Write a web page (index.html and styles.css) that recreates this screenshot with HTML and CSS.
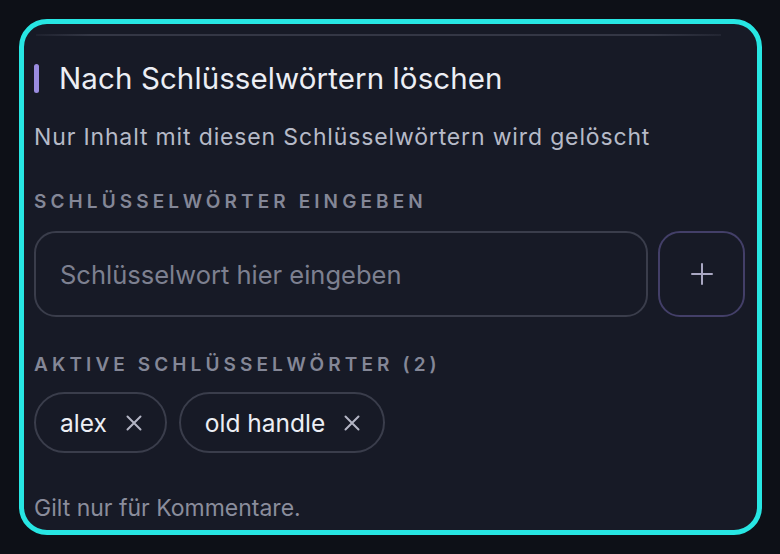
FILE: index.html
```html
<!DOCTYPE html>
<html lang="de">
<head>
<meta charset="utf-8">
<link rel="stylesheet" href="styles.css">
</head>
<body>
<div class="card">
  <div class="divider"></div>
  <h2 class="title"><span class="bar"></span>Nach Schlüsselwörtern löschen</h2>
  <p class="subtitle">Nur Inhalt mit diesen Schlüsselwörtern wird gelöscht</p>
  <div class="label label-input">Schlüsselwörter eingeben</div>
  <div class="input-row">
    <div class="input">Schlüsselwort hier eingeben</div>
    <button class="add" type="button">
      <svg width="22" height="22" viewBox="0 0 22 22"><path d="M11 1v20M1 11h20" stroke="#a9a7c2" stroke-width="2" stroke-linecap="round" fill="none"/></svg>
    </button>
  </div>
  <div class="label label-active">Aktive Schlüsselwörter (2)</div>
  <div class="chips">
    <div class="chip">alex<svg class="x" width="16" height="16" viewBox="0 0 16 16"><path d="M1.5 1.5l13 13M14.5 1.5l-13 13" stroke="#b3b5c4" stroke-width="2" stroke-linecap="round" fill="none"/></svg></div>
    <div class="chip">old handle<svg class="x" width="16" height="16" viewBox="0 0 16 16"><path d="M1.5 1.5l13 13M14.5 1.5l-13 13" stroke="#b3b5c4" stroke-width="2" stroke-linecap="round" fill="none"/></svg></div>
  </div>
  <p class="note">Gilt nur für Kommentare.</p>
</div>
</body>
</html>
```
FILE: styles.css
```css
html, body {
  margin: 0;
  padding: 0;
}
body {
  background: #0d1017;
  width: 780px;
  height: 554px;
  overflow: hidden;
  font-family: Inter, "Noto Sans", sans-serif;
  padding-top: 19px;
  padding-left: 19px;
  box-sizing: border-box;
}
.card {
  width: 743px;
  height: 516px;
  box-sizing: border-box;
  border: 5px solid #27e6e3;
  border-radius: 28px;
  background: #171a26;
  padding: 10px 12px 0 10px;
  display: flex;
  flex-direction: column;
  overflow: hidden;
}
.divider {
  height: 2px;
  flex: 0 0 2px;
  margin-left: 2px;
  margin-right: 24px;
  background: linear-gradient(90deg, rgba(60,63,78,0.2) 0%, #343745 8%, #343745 90%, rgba(60,63,78,0.3) 100%);
}
.title {
  margin: 24px 0 0 0;
  display: flex;
  align-items: center;
  font-size: 29.5px;
  font-weight: 400;
  color: #eceef4;
  line-height: 36px;
  letter-spacing: 0.1px;
}
.bar {
  width: 5px;
  height: 29px;
  border-radius: 3px;
  background: #9a8ce0;
  margin-right: 20px;
}
.subtitle {
  margin: 27px 0 0 0;
  font-size: 23px;
  line-height: 28px;
  letter-spacing: 0.85px;
  color: #b6bac8;
}
.label {
  text-transform: uppercase;
  font-size: 19px;
  font-weight: 600;
  letter-spacing: 4.1px;
  color: #848797;
  line-height: 22px;
}
.label-input {
  margin-top: 40px;
}
.input-row {
  display: flex;
  gap: 10px;
  margin-top: 18px;
}
.input {
  flex: 0 0 614px;
  height: 86px;
  box-sizing: border-box;
  border: 2px solid #3a3d4b;
  border-radius: 22px;
  display: flex;
  align-items: center;
  padding-left: 24px;
  font-size: 25.5px;
  color: #7d8090;
}
.add {
  width: 87px;
  height: 86px;
  box-sizing: border-box;
  border: 2px solid #433f68;
  border-radius: 22px;
  background: transparent;
  display: flex;
  align-items: center;
  justify-content: center;
  padding: 0;
}
.label-active {
  margin-top: 37px;
}
.chips {
  display: flex;
  gap: 12px;
  margin-top: 16px;
}
.chip {
  height: 61px;
  box-sizing: border-box;
  border: 2px solid #3a3d4b;
  border-radius: 31px;
  display: flex;
  align-items: center;
  padding: 0 23px 0 24px;
  font-size: 24.5px;
  color: #eceef4;
}
.x {
  margin-left: 19px;
}
.note {
  margin: 41px 0 0 0;
  font-size: 23px;
  line-height: 28px;
  color: #8a8d9c;
}
```
